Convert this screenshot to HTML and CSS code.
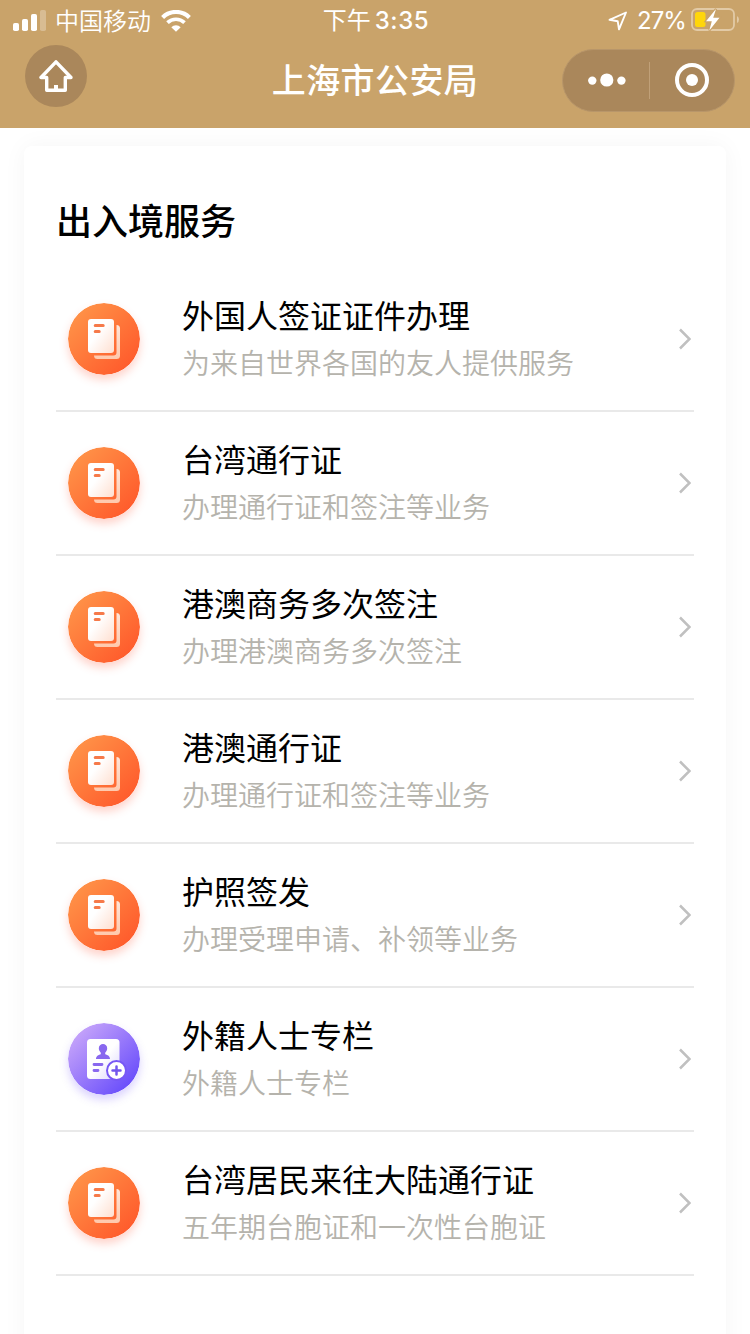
FILE: index.html
```html
<!DOCTYPE html>
<html lang="zh-CN">
<head>
<meta charset="utf-8">
<title>上海市公安局</title>
<link rel="stylesheet" href="styles.css">
</head>
<body>
<svg class="defs" aria-hidden="true">
  <defs>
    <linearGradient id="orange" x1="0" y1="0" x2="1" y2="1"><stop offset=".1" stop-color="#ff9348"/><stop offset=".9" stop-color="#ff592b"/></linearGradient>
    <linearGradient id="purple" x1="0" y1="0" x2="1" y2="1"><stop offset=".1" stop-color="#c8a6fa"/><stop offset=".85" stop-color="#6c50fb"/></linearGradient>
    <linearGradient id="page" x1="0" y1="0" x2="1" y2="1"><stop offset=".4" stop-color="#fff"/><stop offset="1" stop-color="#ffdfd0"/></linearGradient>
    <linearGradient id="back" x1="0" y1="0" x2="0" y2="1"><stop offset="0" stop-color="#ffe5d8"/><stop offset="1" stop-color="#ffc9ad"/></linearGradient>
    <linearGradient id="form" x1="0" y1="0" x2="1" y2="1"><stop offset=".5" stop-color="#fff"/><stop offset="1" stop-color="#d9d2fd"/></linearGradient>
  </defs>
  <symbol id="docs" viewBox="0 0 72 72">
    <circle cx="36" cy="36" r="36" fill="url(#orange)"/>
    <path d="M48.500 22q3.500 0 3.500 3.500V52.500q0 3.500-3.500 3.500H29.500q-3.500 0-3.500-3.500h19.500q3 0 3-3z" fill="url(#back)"/>
    <rect x="20" y="16" width="26" height="34" rx="3" fill="url(#page)"/>
    <path d="M27.200 22.500h8M27.200 28.500h4" stroke="#f67a4a" stroke-width="3" stroke-linecap="round"/>
  </symbol>
  <symbol id="person" viewBox="0 0 72 72">
    <circle cx="36" cy="36" r="36" fill="url(#purple)"/>
    <rect x="19" y="16" width="32.500" height="40" rx="3.500" fill="url(#form)"/>
    <path d="M35 21a4.200 4.200 0 0 1 4.200 4.200c0 2-1 3.300-2 4.600v1.400c2.500.8 4.800 1.800 4.800 4.800H28c0-3 2.300-4 4.800-4.800v-1.400c-1-1.300-2-2.600-2-4.600A4.200 4.200 0 0 1 35 21z" fill="#8968ef"/>
    <path d="M26 41.500h8M26 47.500h4" stroke="#8968ef" stroke-width="2.800" stroke-linecap="round"/>
    <circle cx="48.500" cy="47.500" r="9.500" fill="#fff" stroke="#7758f5" stroke-width="2"/>
    <path d="M44.500 47.500h8M48.500 43.500v8" stroke="#7257ed" stroke-width="2.500" stroke-linecap="round"/>
  </symbol>
  <symbol id="chevron" viewBox="0 0 12 22"><path d="M1 1.500l9.500 9.500L1 20.500" fill="none" stroke="#c0c0c0" stroke-width="2.500"/></symbol>
</svg>

<header class="header">
  <div class="status">
    <div class="status-left">
      <svg class="signal" viewBox="0 0 33 22"><rect y="13" width="6" height="8" rx="1.800"/><rect x="9" y="9" width="6" height="12" rx="1.800"/><rect x="18" y="4" width="6" height="17" rx="1.800"/><rect x="27" width="6" height="21" rx="1.800" opacity=".28"/></svg>
      <span class="carrier">中国移动</span>
      <svg class="wifi" viewBox="0 0 30 22"><path d="M1.600 7.400a19.200 19.200 0 0 1 26.800 0" fill="none" stroke="#fff" stroke-width="4.200"/><path d="M6.500 12.700a12.200 12.200 0 0 1 17 0" fill="none" stroke="#fff" stroke-width="3.700"/><path d="M10.300 17.200a6.700 6.700 0 0 1 9.400 0L15 21.800z"/></svg>
    </div>
    <div class="clock">下午<span class="digits">3:35</span></div>
    <div class="status-right">
      <svg class="location" viewBox="0 0 20 20"><path d="M1.500 8.800L18 1.500 11 18.300 9.700 10.200z" fill="none" stroke="#fff" stroke-width="1.900" stroke-linejoin="round"/></svg>
      <span class="percent">27%</span>
      <svg class="battery" viewBox="0 0 48 24">
        <rect x="1" y="1" width="42" height="21" rx="5" fill="none" stroke="#e2caa6" stroke-width="1.800"/>
        <path d="M46 8q2 1 2 3.500T46 15z" fill="#e2caa6"/>
        <rect x="4" y="4" width="10.500" height="15" rx="2.500" fill="#ffd60a"/>
        <path d="M25 1L15 13.200h5.800L18.300 22.500 28.500 9.800h-6.300z" fill="#fff" stroke="#c9a36a" stroke-width="2.200" paint-order="stroke"/>
      </svg>
    </div>
  </div>
  <nav class="nav">
    <div class="home"><svg class="home-icon" viewBox="0 0 34 32"><path d="M17 1.800L2 17.500h5.700v12.700h18.600V17.500H32z" fill="none" stroke="#fff" stroke-width="3.400" stroke-linejoin="round"/><path d="M15 25h4v6h-4z" fill="#fff"/></svg></div>
    <h1 class="nav-title">上海市公安局</h1>
    <div class="capsule">
      <svg class="dots" viewBox="0 0 38 14"><circle cx="4.300" cy="7.600" r="4.200"/><circle cx="18.800" cy="7" r="6.600"/><circle cx="33.400" cy="7.600" r="4.200"/></svg>
      <span class="divider"></span>
      <svg class="target" viewBox="0 0 34 34"><circle cx="17" cy="17" r="15" fill="none" stroke="#fff" stroke-width="4"/><circle cx="17" cy="17" r="6"/></svg>
    </div>
  </nav>
</header>

<main class="card">
  <h2 class="section-title">出入境服务</h2>
  <ul class="list">
    <li class="row"><svg class="icon"><use href="#docs"/></svg><div class="text"><div class="name">外国人签证证件办理</div><div class="desc">为来自世界各国的友人提供服务</div></div><svg class="chevron"><use href="#chevron"/></svg></li>
    <li class="row"><svg class="icon"><use href="#docs"/></svg><div class="text"><div class="name">台湾通行证</div><div class="desc">办理通行证和签注等业务</div></div><svg class="chevron"><use href="#chevron"/></svg></li>
    <li class="row"><svg class="icon"><use href="#docs"/></svg><div class="text"><div class="name">港澳商务多次签注</div><div class="desc">办理港澳商务多次签注</div></div><svg class="chevron"><use href="#chevron"/></svg></li>
    <li class="row"><svg class="icon"><use href="#docs"/></svg><div class="text"><div class="name">港澳通行证</div><div class="desc">办理通行证和签注等业务</div></div><svg class="chevron"><use href="#chevron"/></svg></li>
    <li class="row"><svg class="icon"><use href="#docs"/></svg><div class="text"><div class="name">护照签发</div><div class="desc">办理受理申请、补领等业务</div></div><svg class="chevron"><use href="#chevron"/></svg></li>
    <li class="row"><svg class="icon icon-purple"><use href="#person"/></svg><div class="text"><div class="name">外籍人士专栏</div><div class="desc">外籍人士专栏</div></div><svg class="chevron"><use href="#chevron"/></svg></li>
    <li class="row"><svg class="icon"><use href="#docs"/></svg><div class="text"><div class="name">台湾居民来往大陆通行证</div><div class="desc">五年期台胞证和一次性台胞证</div></div><svg class="chevron"><use href="#chevron"/></svg></li>
  </ul>
</main>
</body>
</html>
```
FILE: styles.css
```css
* { box-sizing: border-box; margin: 0; padding: 0; }
body {
  width: 750px;
  height: 1334px;
  overflow: hidden;
  background: #fff;
  color: #000;
  font-family: "Noto Sans CJK SC", sans-serif;
}
.defs { position: absolute; width: 0; height: 0; }

.header {
  position: relative;
  z-index: 1;
  height: 128px;
  background: #c9a36a;
  color: #fff;
  fill: #fff;
}
.status {
  display: grid;
  grid-template-columns: 1fr auto 1fr;
  align-items: center;
  height: 40px;
  padding: 0 11px 0 13px;
}
.status-left, .status-right { display: flex; align-items: center; }
.status-right { justify-content: flex-end; }
.signal { width: 33px; height: 22px; }
.carrier { margin: 0 10px 0 9px; padding-bottom: 2px; font-size: 24px; line-height: 38px; font-weight: 350; }
.wifi { width: 30px; height: 22px; }
.clock { padding-bottom: 1px; font-size: 24px; line-height: 38px; }
.digits { margin-left: 4px; font: 500 24px/38px Inter, sans-serif; letter-spacing: .6px; }
.location { width: 20px; height: 20px; margin-right: 9px; }
.percent { font: 400 24px/40px Inter, sans-serif; letter-spacing: -.9px; }
.battery { width: 48px; height: 24px; margin-left: 5px; margin-bottom: 1px; }

.nav {
  display: grid;
  grid-template-columns: 1fr auto 1fr;
  align-items: center;
  height: 80px;
  padding: 0 15px;
}
.home {
  display: flex;
  align-items: center;
  justify-content: center;
  width: 62px;
  height: 62px;
  margin: 0 0 8px 10px;
  border-radius: 50%;
  background: #aa875b;
}
.home-icon { width: 34px; height: 32px; }
.nav-title { padding-bottom: 2px; font-size: 34px; line-height: 50px; font-weight: 500; letter-spacing: .4px; }
.capsule {
  justify-self: end;
  display: flex;
  align-items: center;
  width: 173px;
  height: 63px;
  padding: 0 24px 0 25px;
  border: 1px solid #b8966a;
  border-radius: 32px;
  background: #aa875b;
}
.dots { width: 38px; height: 14px; }
.divider { width: 1px; height: 37px; margin: 0 25px 0 23px; background: #c0a078; }
.target { flex: none; width: 34px; height: 34px; }

.card {
  height: 1240px;
  margin: 18px 24px 0;
  padding: 44px 32px 0;
  border-radius: 8px;
  background: #fff;
  box-shadow: 0 0 24px rgba(50, 50, 30, .045);
}
.section-title { height: 78px; font-size: 36px; line-height: 59px; font-weight: 500; }
.list { list-style: none; }
.row {
  display: flex;
  align-items: center;
  height: 144px;
  padding: 0 3px 0 12px;
  border-bottom: 2px solid #e9e9e9;
}
.icon {
  flex: none;
  width: 72px;
  height: 72px;
  border-radius: 50%;
  box-shadow: 0 5px 8px rgba(255, 85, 50, .25);
}
.icon-purple { box-shadow: 0 5px 8px rgba(112, 80, 250, .25); }
.text { flex: 1; margin-left: 42px; padding-bottom: 1px; }
.name { font-size: 32px; line-height: 47px; }
.desc { font-size: 28px; line-height: 49px; color: #b5b3ac; font-weight: 350; }
.chevron { flex: none; width: 12px; height: 22px; }
```
